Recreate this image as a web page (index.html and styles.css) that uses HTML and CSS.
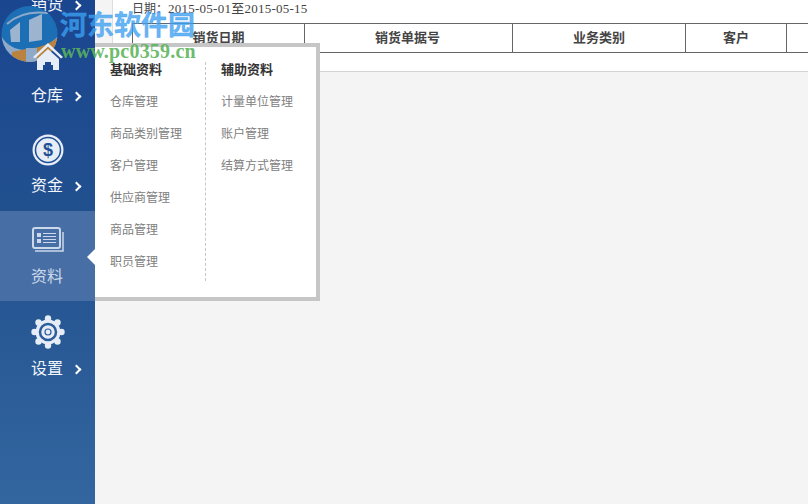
FILE: index.html
```html
<!DOCTYPE html>
<html>

<head>
  <meta charset="utf-8">
  <title>销货报表</title>
  <link rel="stylesheet" href="styles.css">
</head>

<body>

  <div class="app">

    <!-- Left navigation -->
    <div class="sidebar">
      <div class="nav-item nav-top">
        <div class="nav-label">销货<span class="chev"></span></div>
      </div>
      <div class="nav-item nav-store">
        <svg class="nav-icon" width="30" height="28" viewBox="0 0 30 28">
          <path d="M15 0 L30 14 L28 15.5 L15 3.5 L2 15.5 L0 14 Z" fill="#e6edf7" />
          <path d="M15 6 L26 16 V27 H4 V16 Z" fill="#e6edf7" />
          <path d="M10 27 V22 H12 V19 H18 V22 H20 V27 Z" fill="#1b4a92" />
        </svg>
        <div class="nav-label">仓库<span class="chev"></span></div>
      </div>
      <div class="nav-item nav-money">
        <svg class="nav-icon" width="32" height="32" viewBox="0 0 32 32">
          <circle cx="16" cy="16" r="15.5" fill="#e6edf7" />
          <circle cx="16" cy="16" r="12.5" fill="none" stroke="#1f4f94" stroke-width="1.5" />
          <text x="16" y="22" class="dollar">$</text>
        </svg>
        <div class="nav-label">资金<span class="chev"></span></div>
      </div>
      <div class="nav-item active">
        <svg class="nav-icon" width="32" height="26" viewBox="0 0 32 26">
          <path d="M3 24 H31 V5" fill="none" stroke="#ccd9ea" stroke-width="1.5" />
          <rect x="1" y="1" width="27" height="20" rx="2" fill="#486fa5" stroke="#ccd9ea" stroke-width="2" />
          <rect x="5" y="6" width="4" height="4" fill="#ccd9ea" />
          <rect x="5" y="12" width="4" height="4" fill="#ccd9ea" />
          <path d="M11 6.5 H24 M11 9.5 H24 M11 12.5 H24 M11 15.5 H24" stroke="#ccd9ea" stroke-width="1" />
        </svg>
        <div class="nav-label">资料</div>
        <span class="active-arrow"></span>
      </div>
      <div class="nav-item nav-gear">
        <svg class="nav-icon" width="34" height="34" viewBox="0 0 34 34">
          <g fill="#e6edf7">
            <circle cx="17" cy="17" r="12.5" />
            <circle cx="17" cy="3.5" r="3.2" />
            <circle cx="17" cy="30.5" r="3.2" />
            <circle cx="3.5" cy="17" r="3.2" />
            <circle cx="30.5" cy="17" r="3.2" />
            <circle cx="7.5" cy="7.5" r="3.2" />
            <circle cx="26.5" cy="7.5" r="3.2" />
            <circle cx="7.5" cy="26.5" r="3.2" />
            <circle cx="26.5" cy="26.5" r="3.2" />
          </g>
          <circle cx="17" cy="17" r="8" fill="none" stroke="#2b5c9c" stroke-width="2.5" />
          <circle cx="17" cy="17" r="3" fill="none" stroke="#2b5c9c" stroke-width="1.2" />
        </svg>
        <div class="nav-label">设置<span class="chev"></span></div>
      </div>
    </div>

    <!-- Report area -->
    <div class="main">
      <div class="report-top">
        <div class="row-gutter"></div>
        <div class="report-body">
          <div class="date-line">日期：<span class="date-range">2015-05-01至2015-05-15</span></div>
          <div class="table-head">
            <div class="th th-date">销货日期</div>
            <div class="th th-no">销货单据号</div>
            <div class="th th-type">业务类别</div>
            <div class="th th-customer">客户</div>
            <div class="th th-rest"></div>
          </div>
        </div>
      </div>
      <div class="empty-row"></div>
    </div>
  </div>

  <!-- Flyout menu for 资料 -->
  <div class="flyout">
    <div class="fly-col fly-left">
      <div class="fly-title">基础资料</div>
      <div class="fly-link">仓库管理</div>
      <div class="fly-link">商品类别管理</div>
      <div class="fly-link">客户管理</div>
      <div class="fly-link">供应商管理</div>
      <div class="fly-link">商品管理</div>
      <div class="fly-link">职员管理</div>
    </div>
    <div class="fly-col">
      <div class="fly-title">辅助资料</div>
      <div class="fly-link">计量单位管理</div>
      <div class="fly-link">账户管理</div>
      <div class="fly-link">结算方式管理</div>
    </div>
  </div>

  <!-- Site watermark -->
  <div class="watermark">
    <svg class="wm-logo" width="60" height="64" viewBox="0 0 60 64">
      <defs>
        <clipPath id="wm-disc">
          <circle cx="29.5" cy="34" r="28" />
        </clipPath>
      </defs>
      <g clip-path="url(#wm-disc)">
        <rect width="60" height="64" fill="#1c6fb4" />
        <path d="M0 34 Q8 50 26 50 Q46 50 60 34 V64 H0 Z" fill="#8fa9c9" />
        <path d="M12 52 Q30 48 34 48 L34 64 H12 Z" fill="#b9833f" />
        <path d="M34 48 Q48 46 60 36 V64 H34 Z" fill="#b9833f" />
        <path d="M26 48 H37 V64 H26 Z" fill="#8fa9c9" />
        <path d="M10 30 L20 22 L20 42 L11 42 Z" fill="#9cb4d0" />
        <path d="M29 20 L42 14 L42 40 L29 42 Z" fill="#9cb4d0" />
        <path d="M7 24 Q22 10 48 13" fill="none" stroke="#8fa9c9" stroke-width="2" />
      </g>
    </svg>
    <div class="wm-name">河东软件园</div>
    <div class="wm-url">www.pc0359.cn</div>
  </div>

</body>

</html>
```

FILE: styles.css
```css
html, body {
  margin: 0;
  padding: 0;
  height: 504px;
  overflow: hidden;
}

body {
  position: relative;
  font-family: "Liberation Sans", "Noto Sans CJK SC", sans-serif;
  background: #f4f4f4;
}

.app {
  display: flex;
  height: 504px;
}

/* sidebar */
.sidebar {
  width: 95px;
  flex-shrink: 0;
  height: 504px;
  overflow: hidden;
  background: linear-gradient(to bottom, #1a4690 0%, #22518f 45%, #33669f 100%);
}

.nav-item {
  position: relative;
  height: 90px;
  display: flex;
  flex-direction: column;
  align-items: center;
  color: #fff;
}

.nav-top {
  height: 31px;
}

.nav-icon {
  display: block;
}

.nav-label {
  position: relative;
  margin-right: 1px;
  font-size: 16px;
  line-height: 20px;
  color: #f2f5fa;
}

.nav-top .nav-label { margin-top: -5px; }

/* the house sits above the watermark disc */
.nav-store .nav-icon {
  position: relative;
  z-index: 2;
  margin-top: 12px;
}
.nav-store .nav-label { margin-top: 15px; }

.nav-money .nav-icon { margin-top: 13px; }
.nav-money .nav-label { margin-top: 10px; }

.nav-gear .nav-icon { margin-top: 14px; }
.nav-gear .nav-label { margin-top: 10px; }

.chev {
  position: absolute;
  left: 42px;
  top: 7px;
  width: 5px;
  height: 5px;
  border-top: 2px solid #fff;
  border-right: 2px solid #fff;
  transform: rotate(45deg);
}

.active {
  background: #486fa5;
}

.active .nav-label {
  margin-top: 14px;
  color: #ccd9ea;
}

.active .nav-icon {
  margin-top: 16px;
}

.active-arrow {
  position: absolute;
  right: 0;
  top: 38px;
  border: 8px solid transparent;
  border-right-color: #fff;
  border-left-width: 0;
}

/* report */
.main {
  flex: 1;
  min-width: 0;
}

.report-top {
  display: flex;
  height: 53px;
  background: #fff;
}

.row-gutter {
  width: 17px;
  background: #f4f4f4;
  border-right: 1px solid #ddd;
}

.report-body {
  flex: 1;
  min-width: 0;
}

.date-line {
  height: 23px;
  line-height: 18px;
  padding-left: 19px;
  font-size: 12px;
  color: #444;
  font-family: "Liberation Serif", "Noto Sans CJK SC", serif;
}

.date-range {
  font-size: 13px;
  letter-spacing: 0.25px;
}

.table-head {
  display: flex;
  height: 30px;
  box-sizing: border-box;
  margin-left: 19px;
  border-top: 1px solid #666;
  border-bottom: 1px solid #666;
  border-left: 1px solid #666;
}

.th {
  box-sizing: border-box;
  border-right: 1px solid #666;
  font-size: 13px;
  font-weight: bold;
  line-height: 27px;
  text-align: center;
  color: #444;
}

.th-date { width: 172px; }
.th-no { width: 208px; padding-right: 2px; }
.th-type { width: 173px; }
.th-customer { width: 101px; }
.th-rest { flex: 1; border-right: 0; }

.empty-row {
  height: 18px;
  background: #fff;
  border-bottom: 1px solid #d4d4d4;
}

/* flyout */
.flyout {
  position: absolute;
  left: 95px;
  top: 43px;
  width: 225px;
  height: 258px;
  box-sizing: border-box;
  display: flex;
  padding: 15px 0 0;
  background: #fff;
  border-top: 4px solid #c6c6c6;
  border-right: 4px solid #c6c6c6;
  border-bottom: 4px solid #c6c6c6;
}

.fly-col {
  padding-left: 15px;
}

.fly-left {
  width: 95px;
  height: 219px;
  border-right: 1px dashed #c6c6c6;
}

.fly-title {
  font-size: 13px;
  font-weight: bold;
  line-height: 16px;
  color: #333;
  margin-bottom: 16px;
}

.fly-link {
  font-size: 12px;
  line-height: 16px;
  color: #808080;
  margin-bottom: 16px;
  white-space: nowrap;
}

/* watermark */
.watermark {
  position: absolute;
  z-index: 1;
  left: 0;
  top: 0;
  width: 200px;
  height: 64px;
}

.wm-logo {
  position: absolute;
  left: 0;
  top: 0;
}

.wm-name {
  position: absolute;
  left: 60px;
  top: 9px;
  font-family: "Liberation Serif", "Noto Sans CJK SC", serif;
  font-size: 27px;
  line-height: 34px;
  font-weight: bold;
  -webkit-text-stroke: 0.4px rgba(60, 160, 240, 0.8);
  color: rgba(60, 160, 240, 0.8);
  white-space: nowrap;
}

.wm-url {
  position: absolute;
  left: 61px;
  top: 41px;
  font-family: "Liberation Serif", serif;
  font-size: 20px;
  line-height: 20px;
  font-weight: bold;
  letter-spacing: 0.2px;
  color: rgba(90, 180, 90, 0.9);
  white-space: nowrap;
}

.dollar {
  font-family: "Liberation Sans", sans-serif;
  font-size: 18px;
  font-weight: bold;
  text-anchor: middle;
  fill: #1f4f94;
}
```
